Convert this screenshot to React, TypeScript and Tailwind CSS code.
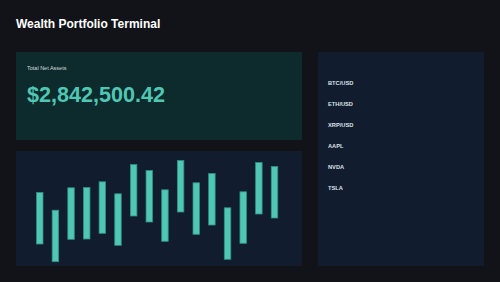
const bars = [41, 58.7, 36.3, 36, 30.3, 42.3, 13, 19, 38.3, 9, 31.3, 22, 56.3, 40.3, 11, 15];

const tickers = ["BTC/USD", "ETH/USD", "XRP/USD", "AAPL", "NVDA", "TSLA"];

function Chart() {
  return (
    <svg width="286" height="115" viewBox="0 0 286 115" className="block">
      {bars.map((top, i) => (
        <rect
          key={i}
          x={20.5 + i * 15.65}
          y={top + 0.5}
          width="6.5"
          height="51.5"
          fill="#4fc7b4"
          stroke="#2f8f80"
          strokeWidth="0.8"
        />
      ))}
    </svg>
  );
}

export default function App() {
  return (
    <div className="w-[500px] h-[282px] bg-[#121318] px-4 pt-4 font-['Liberation_Sans',Arial,sans-serif] overflow-hidden">
      <h1 className="text-[12px] leading-[16px] font-bold text-white">
        Wealth Portfolio Terminal
      </h1>

      <div className="mt-5 grid grid-cols-[286px_166px] gap-x-4">
        <div className="flex flex-col gap-[11px]">
          <div className="h-[88px] bg-[#0d2a2c] pl-[11px] pt-[13px]">
            <div className="text-[5.5px] leading-[7px] text-[#d5dcdc]">Total Net Assets</div>
            <div className="mt-[12px] text-[21.6px] leading-[22px] font-bold text-[#4fc7b4]">
              $2,842,500.42
            </div>
          </div>
          <div className="h-[115px] bg-[#111c2e]">
            <Chart />
          </div>
        </div>

        <div className="h-[214px] bg-[#111c2e] pl-[10px] pt-[21px]">
          {tickers.map((t) => (
            <div
              key={t}
              className="h-[21px] flex items-center text-[5.7px] font-bold text-[#dde2ea]"
            >
              {t}
            </div>
          ))}
        </div>
      </div>
    </div>
  );
}
